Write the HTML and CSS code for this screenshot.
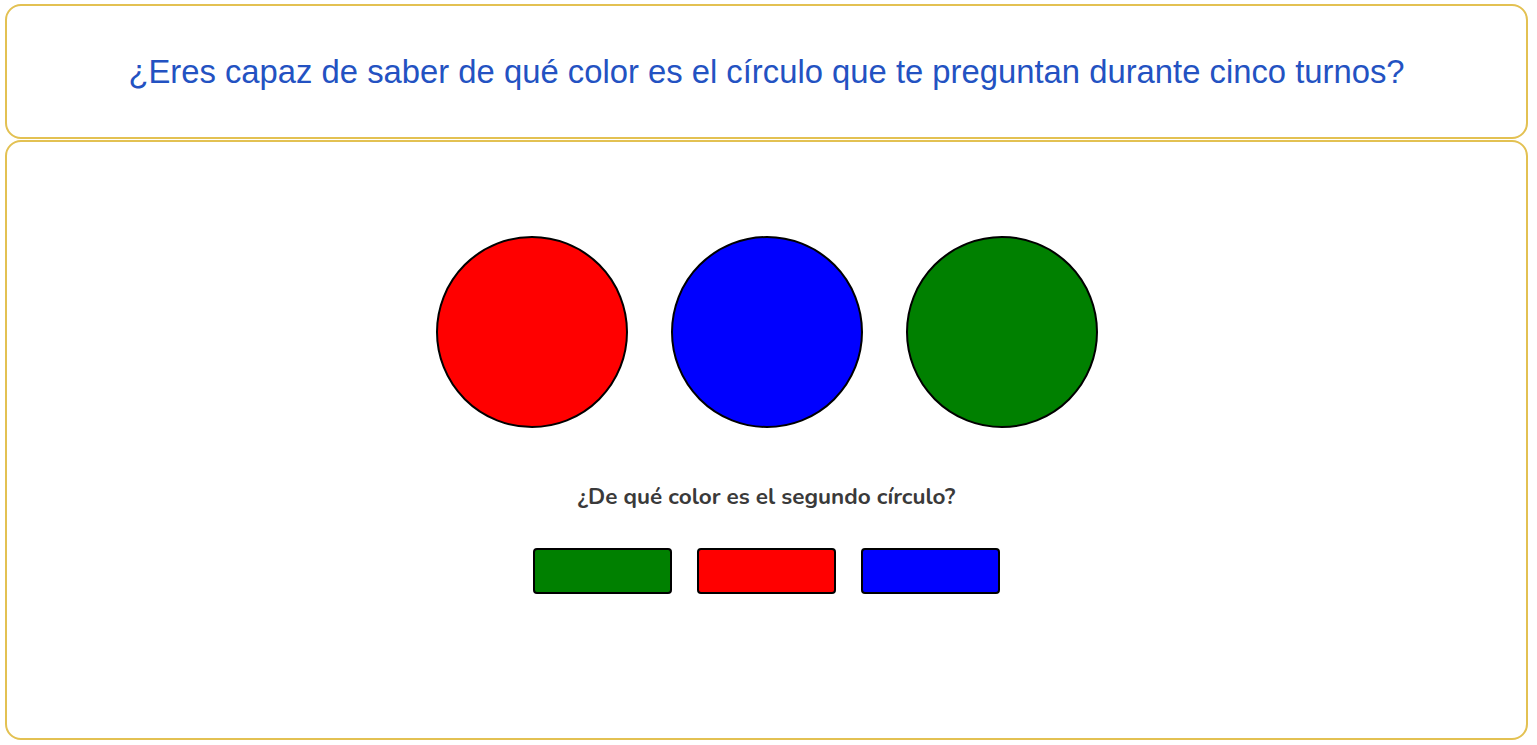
FILE: index.html
```html
<!DOCTYPE html>
<html lang="es">
<head>
<meta charset="utf-8">
<title>Círculos</title>
<link rel="stylesheet" href="styles.css">
</head>
<body>
<div class="page">
  <header class="card title-card">
    <h1 class="title">¿Eres capaz de saber de qué color es el círculo que te preguntan durante cinco turnos?</h1>
  </header>
  <main class="card game-card">
    <div class="circles">
      <div class="circle red"></div>
      <div class="circle blue"></div>
      <div class="circle green"></div>
    </div>
    <p class="question">¿De qué color es el segundo círculo?</p>
    <div class="options">
      <button class="option green" aria-label="verde"></button>
      <button class="option red" aria-label="rojo"></button>
      <button class="option blue" aria-label="azul"></button>
    </div>
  </main>
</div>
</body>
</html>
```

FILE: styles.css
```css
html, body {
  margin: 0;
  padding: 0;
  background: #ffffff;
}

.page {
  padding: 4px 9px 0 5px;
  display: flex;
  flex-direction: column;
  gap: 1px;
}

.card {
  border: 2px solid #e3c152;
  border-radius: 16px;
  box-sizing: border-box;
  background: #fff;
}

.title-card {
  height: 135px;
  display: flex;
  align-items: center;
  justify-content: center;
}

.title {
  margin: 0;
  font-family: "Liberation Sans", Arial, sans-serif;
  font-weight: normal;
  font-size: 32.8px;
  color: #2352c2;
  text-align: center;
}

.game-card {
  height: 600px;
  display: flex;
  flex-direction: column;
  align-items: center;
  padding-top: 94px;
}

.circles {
  display: flex;
  gap: 43px;
}

.circle {
  width: 192px;
  height: 192px;
  border-radius: 50%;
  border: 2.5px solid #000;
  box-sizing: border-box;
}

.red { background: #ff0000; }
.blue { background: #0000ff; }
.green { background: #008000; }

.question {
  margin: 55px 0 0;
  font-family: "Nunito", "Lato", "Open Sans", sans-serif;
  font-weight: bold;
  font-size: 22.5px;
  color: #3a3a3a;
  line-height: 28px;
}

.options {
  display: flex;
  gap: 25px;
  margin-top: 37px;
}

.option {
  width: 139px;
  height: 46px;
  border: 2.5px solid #000;
  border-radius: 4px;
  box-sizing: border-box;
  padding: 0;
  cursor: pointer;
}
```
